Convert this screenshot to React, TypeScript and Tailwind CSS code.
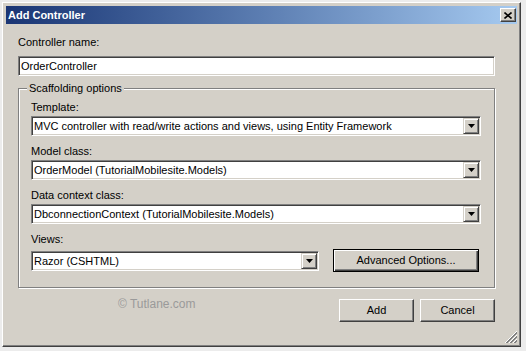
import React from 'react';

const raised =
  'border border-t-white border-l-white border-b-[#404040] border-r-[#404040] shadow-[inset_-1px_-1px_0_#808080] bg-[#d4d0c8]';

function Field({ value }: { value: string }) {
  return (
    <div className="h-[20px] w-full border border-t-[#808080] border-l-[#808080] border-b-white border-r-white bg-white shadow-[inset_1px_1px_0_#404040,inset_-1px_-1px_0_#d4d0c8] p-[1px]">
      <div className="pl-[1px] leading-[16px] whitespace-nowrap overflow-hidden">{value}</div>
    </div>
  );
}

function Combo({ value, className = 'w-full' }: { value: string; className?: string }) {
  return (
    <div
      className={`${className} h-[20px] flex border border-t-[#808080] border-l-[#808080] border-b-white border-r-white bg-white shadow-[inset_1px_1px_0_#404040,inset_-1px_-1px_0_#d4d0c8] p-[1px]`}
    >
      <div className="flex-1 pl-[1px] leading-[16px] whitespace-nowrap overflow-hidden">{value}</div>
      <div className="w-[16px] h-[16px] flex items-center justify-center border border-t-[#d4d0c8] border-l-[#d4d0c8] border-b-[#404040] border-r-[#404040] bg-[#d4d0c8] shadow-[inset_1px_1px_0_#fff,inset_-1px_-1px_0_#808080]">
        <svg width="7" height="4" viewBox="0 0 7 4">
          <polygon points="0,0 7,0 3.5,4" fill="#000" />
        </svg>
      </div>
    </div>
  );
}

function Label({ children, className = '' }: { children: React.ReactNode; className?: string }) {
  return <div className={`leading-[13px] ${className}`}>{children}</div>;
}

export default function App() {
  return (
    <div className="w-[526px] h-[351px] bg-[#ececec] pl-[2px] pt-[2px] font-['Liberation_Sans',Arial,sans-serif] text-[11px] text-black">
      <div className="relative w-[519px] h-[345px] bg-[#d4d0c8] border border-t-white border-l-white border-b-[#404040] border-r-[#404040] shadow-[inset_-1px_-1px_0_#808080] p-[3px] flex flex-col">
        {/* title bar */}
        <div className="h-[18px] flex items-center bg-gradient-to-r from-[#1a3574] to-[#a6caf0] pl-[2px] pr-[1px]">
          <span className="flex-1 font-bold text-white text-[11px] leading-[13px]">Add Controller</span>
          <div className={`w-[16px] h-[14px] flex items-center justify-center ${raised}`}>
            <svg width="8" height="7" viewBox="0 0 8 7">
              <path d="M0.5 0.5 L7.5 6.5 M7.5 0.5 L0.5 6.5" stroke="#000" strokeWidth="1.6" />
            </svg>
          </div>
        </div>

        {/* body */}
        <div className="flex-1 flex flex-col pl-[12px] pr-[22px] pt-[12px]">
          <Label>Controller name:</Label>
          <div className="mt-[7px]">
            <Field value="OrderController" />
          </div>

          <div className="relative mt-[12px] border border-[#808080] shadow-[inset_1px_1px_0_#fff,1px_1px_0_#fff] pl-[12px] pr-[13px] pt-[12px] pb-[15px]">
            <div className="absolute -top-[7px] left-[8px] px-[2px] bg-[#d4d0c8] leading-[13px]">
              Scaffolding options
            </div>
            <Label>Template:</Label>
            <div className="mt-[2px]">
              <Combo value="MVC controller with read/write actions and views, using Entity Framework" />
            </div>
            <Label className="mt-[9px]">Model class:</Label>
            <div className="mt-[2px]">
              <Combo value="OrderModel (TutorialMobilesite.Models)" />
            </div>
            <Label className="mt-[9px]">Data context class:</Label>
            <div className="mt-[2px]">
              <Combo value="DbconnectionContext (TutorialMobilesite.Models)" />
            </div>
            <Label className="mt-[9px]">Views:</Label>
            <div className="mt-[3px] flex items-center gap-[14px]">
              <Combo value="Razor (CSHTML)" className="w-[288px]" />
              <div className="w-[146px] h-[23px] border border-black">
                <div className="w-full h-full flex items-center justify-center bg-[#d4d0c8] shadow-[inset_1px_1px_0_#fff,inset_-1px_-1px_0_#404040,inset_-2px_-2px_0_#808080]">
                  Advanced Options...
                </div>
              </div>
            </div>
          </div>

          <div className="mt-[11px] flex items-start">
            <div className="flex-1 pl-[100px] -mt-[2px] text-[12px] leading-[14px] text-[#9a9a9a]">
              © Tutlane.com
            </div>
            <div className="flex gap-[6px]">
              <div className={`w-[75px] h-[23px] flex items-center justify-center ${raised}`}>Add</div>
              <div className={`w-[75px] h-[23px] flex items-center justify-center ${raised}`}>Cancel</div>
            </div>
          </div>
        </div>

        {/* resize grip */}
        <svg className="absolute right-[2px] bottom-[2px]" width="13" height="13" viewBox="0 0 13 13">
          <path d="M12 1 L1 12 M12 5 L5 12 M12 9 L9 12" stroke="#808080" strokeWidth="1" />
          <path d="M12 2 L2 12 M12 6 L6 12 M12 10 L10 12" stroke="#808080" strokeWidth="1" />
          <path d="M12 0 L0 12 M12 4 L4 12 M12 8 L8 12" stroke="#fff" strokeWidth="1" />
        </svg>
      </div>
    </div>
  );
}
